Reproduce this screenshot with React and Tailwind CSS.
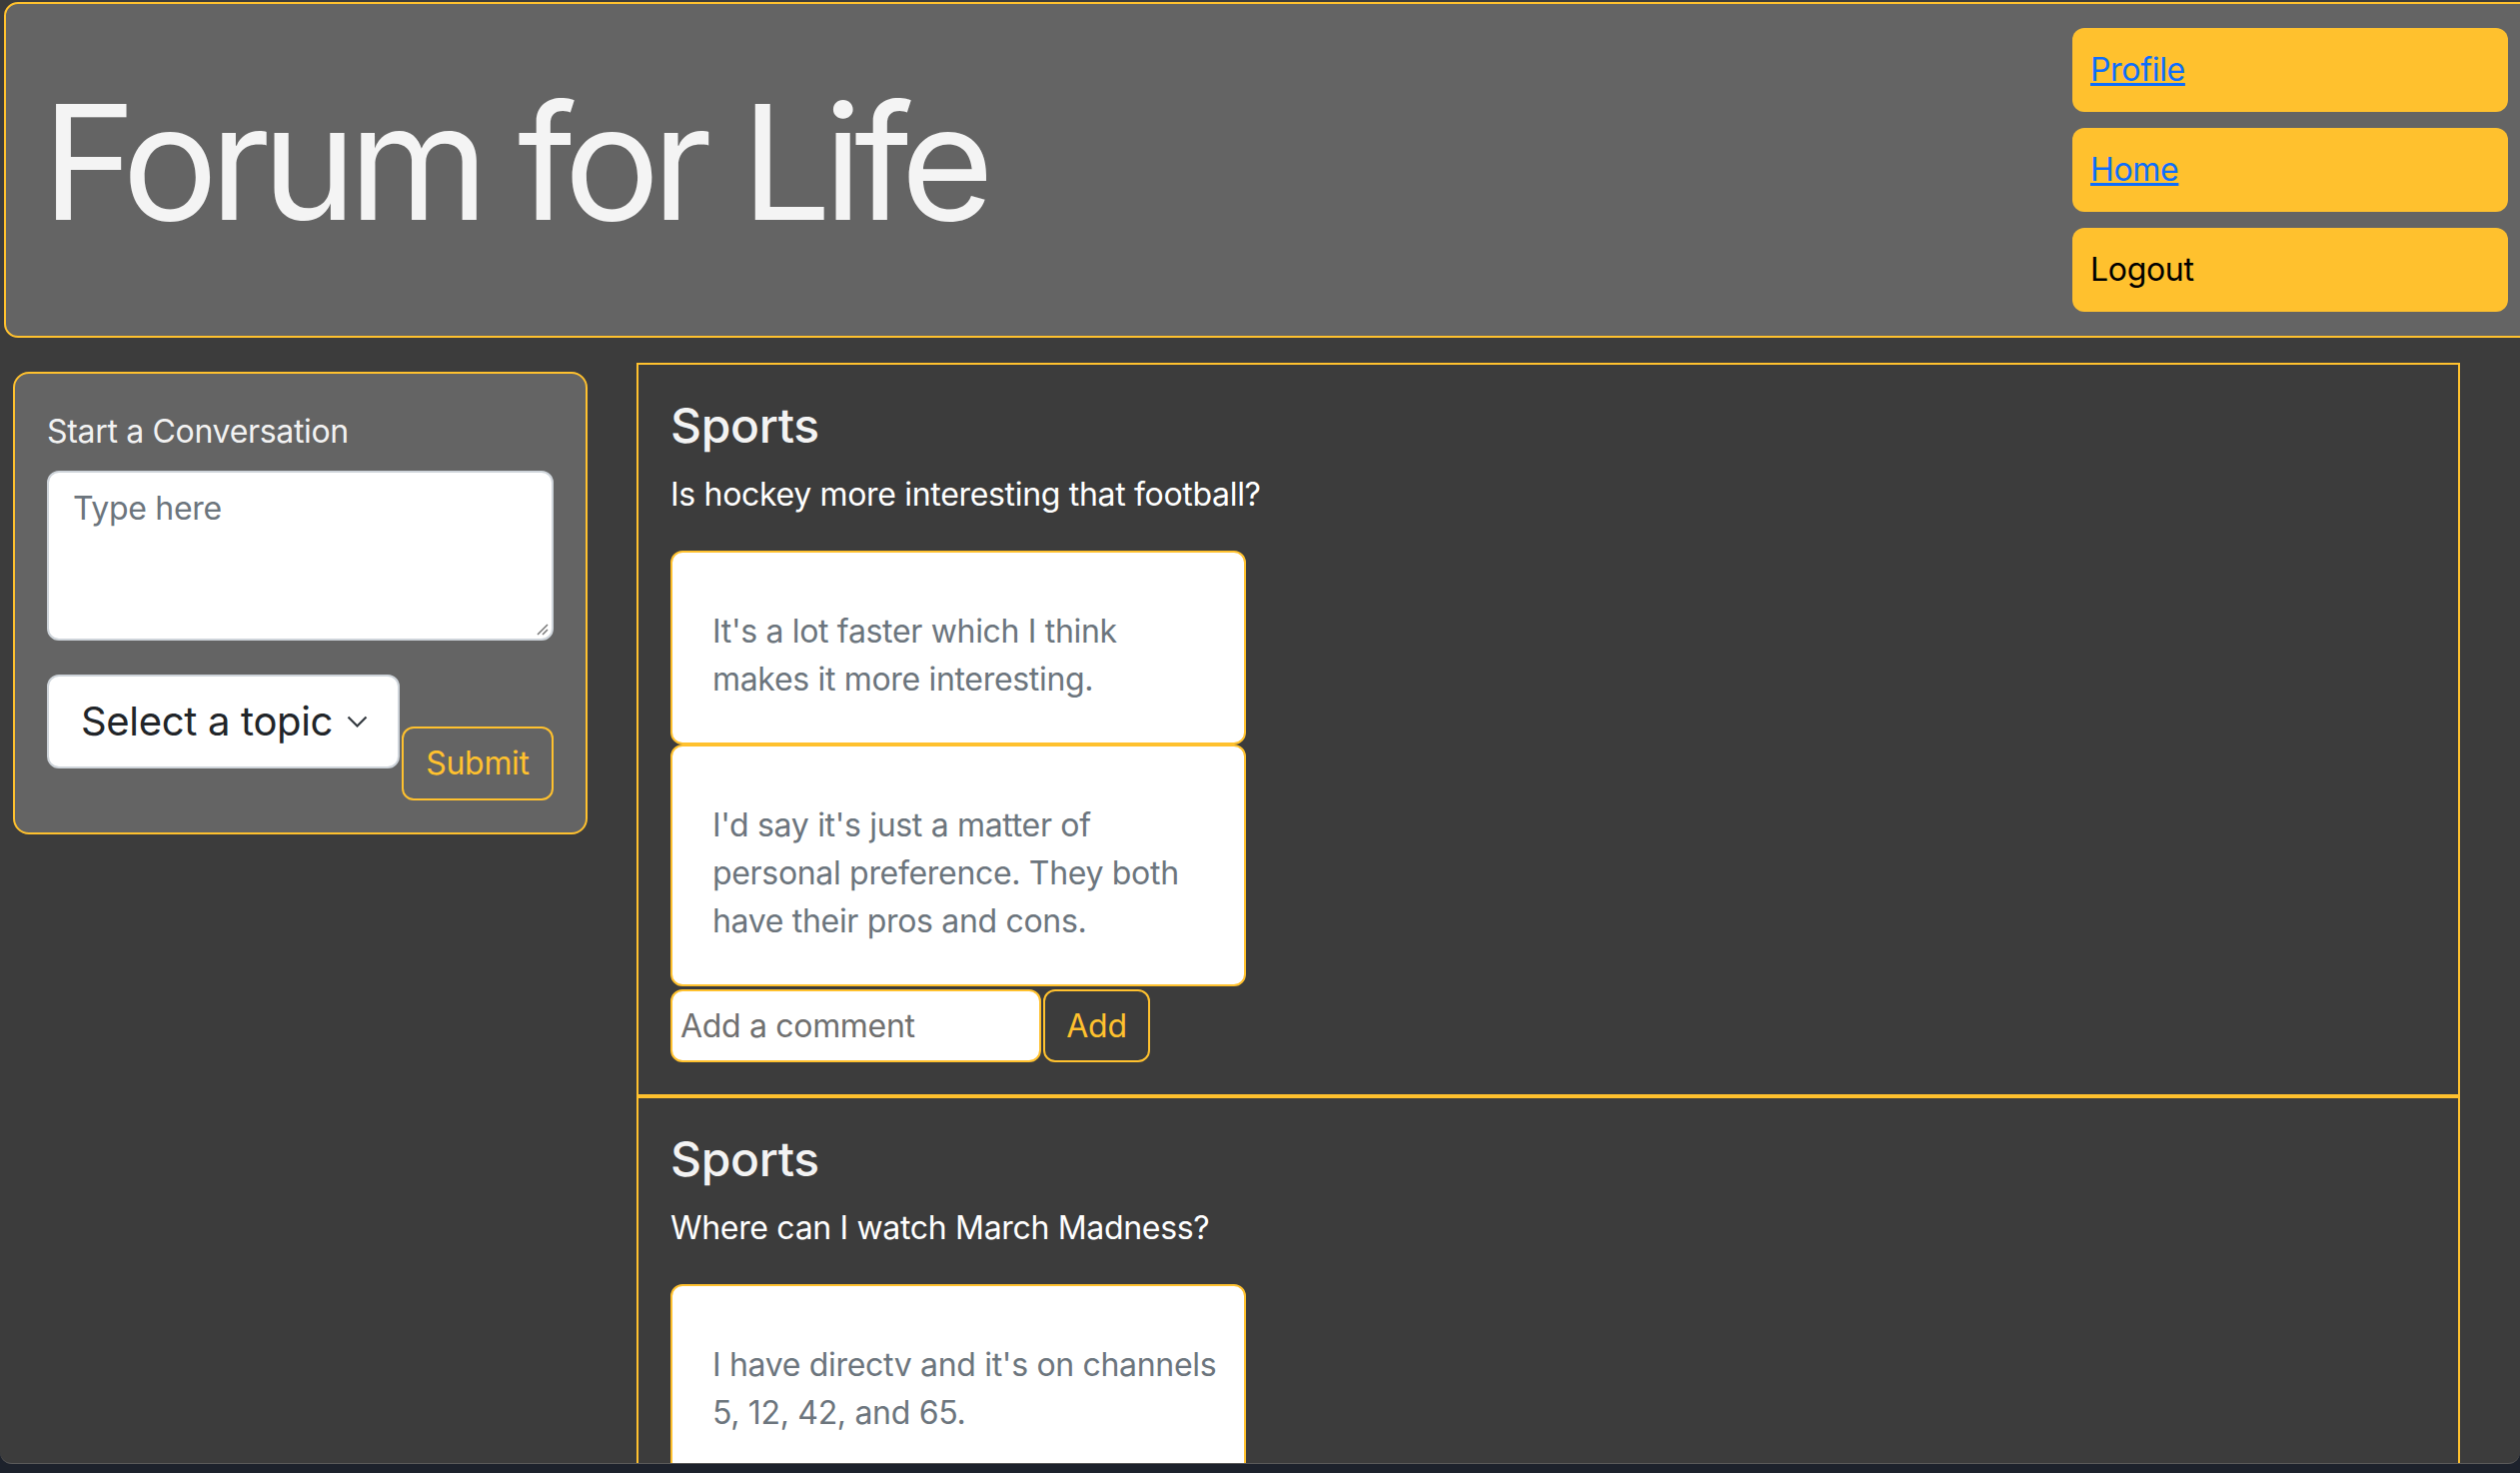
import React from "react";

function Card({ lines }) {
  return (
    <div className="w-[576px] rounded-[12px] border-2 border-[#ffc12e] bg-white pl-[40px] pr-[32px] pt-[55px] pb-[39px]">
      {lines.map((l, i) => (
        <div key={i} className="whitespace-nowrap text-[32px] leading-[48px] text-[#6c757d]">
          {l}
        </div>
      ))}
    </div>
  );
}

function Post({ question, cards, withInput }) {
  return (
    <div className="border-2 border-[#ffc12e] px-[32px] pt-[32px] pb-[32px]">
      <h4 className="text-[48px] font-medium leading-[58px] text-[#f3f3f3]">Sports</h4>
      <p className="mt-[16px] text-[32px] leading-[48px] text-white">{question}</p>
      <div className="mt-[32px] flex flex-col">
        {cards.map((c, i) => (
          <Card key={i} lines={c} />
        ))}
      </div>
      {withInput && (
        <div className="mt-[3px] flex items-stretch">
          <div className="flex h-[73px] w-[371px] items-center rounded-[12px] border-2 border-[#ffc12e] bg-white pl-[8px] text-[32px] text-[#707070]">
            Add a comment
          </div>
          <div className="ml-[2px] flex h-[73px] w-[107px] items-center justify-center rounded-[12px] border-2 border-[#ffc12e] bg-[#3c3c3c] text-[32px] text-[#ffc12e]">
            Add
          </div>
        </div>
      )}
    </div>
  );
}

export default function App() {
  return (
    <div className="h-[1474px] w-[2522px] overflow-hidden bg-[#1d222c] font-['Inter','Noto_Sans',sans-serif] tracking-[-0.02em]">
      <div className="h-[1465px] overflow-hidden rounded-b-[12px] border-b border-[#5a5a5a] bg-[#3c3c3c]">
        <header className="ml-[4px] mt-[2px] flex h-[336px] w-[2540px] items-center justify-between rounded-l-[14px] border-2 border-[#ffc12e] bg-[#646464] pl-[36px] pr-[32px]">
          <h1 className="mb-[16px] whitespace-nowrap text-[160px] font-normal leading-[192px] tracking-[-8px] text-[#f4f4f4]">
            Forum for Life
          </h1>
          <nav className="flex w-[436px] flex-col gap-[16px]">
            <div className="flex h-[84px] items-center rounded-[12px] bg-[#ffc12e] pl-[18px] text-[32px]">
              <a className="text-[#0d6efd] underline">Profile</a>
            </div>
            <div className="flex h-[84px] items-center rounded-[12px] bg-[#ffc12e] pl-[18px] text-[32px]">
              <a className="text-[#0d6efd] underline">Home</a>
            </div>
            <div className="flex h-[84px] items-center rounded-[12px] bg-[#ffc12e] pl-[18px] text-[32px] text-black">
              Logout
            </div>
          </nav>
        </header>

        <div className="flex items-start">
          <aside className="ml-[13px] mt-[34px] w-[575px] rounded-[16px] border-2 border-[#ffc12e] bg-[#646464] px-[32px] pt-[34px] pb-[32px]">
            <div className="text-[32px] leading-[48px] text-[#f2f2f2]">Start a Conversation</div>
            <div className="relative mt-[15px] h-[170px] rounded-[12px] border-2 border-[#ced4da] bg-white px-[24px] py-[12px] text-[32px] leading-[48px] text-[#6c757d]">
              Type here
              <svg className="absolute bottom-[3px] right-[3px]" width="14" height="14" viewBox="0 0 14 14">
                <path d="M13 3 L3 13 M13 8 L8 13" stroke="#777" strokeWidth="1.5" />
              </svg>
            </div>
            <div className="mt-[34px] flex items-start">
              <div className="flex h-[94px] w-[353px] items-center justify-between rounded-[12px] border-2 border-[#ced4da] bg-white pl-[32px] pr-[30px] text-[40px] text-[#212529]">
                <span className="whitespace-nowrap">Select a topic</span>
                <svg width="21" height="12" viewBox="0 0 21 12">
                  <path d="M1.5 1.5 L10.5 10.5 L19.5 1.5" stroke="#343a40" strokeWidth="2.2" fill="none" />
                </svg>
              </div>
              <div className="ml-[2px] mt-[52px] flex h-[74px] w-[152px] items-center justify-center rounded-[12px] border-2 border-[#ffc12e] text-[32px] text-[#ffc12e]">
                Submit
              </div>
            </div>
          </aside>

          <main className="ml-[49px] mt-[25px] w-[1825px]">
            <Post
              question="Is hockey more interesting that football?"
              cards={[
                ["It's a lot faster which I think", "makes it more interesting."],
                [
                  "I'd say it's just a matter of",
                  "personal preference. They both",
                  "have their pros and cons.",
                ],
              ]}
              withInput
            />
            <Post
              question="Where can I watch March Madness?"
              cards={[["I have directv and it's on channels", "5, 12, 42, and 65."]]}
              withInput
            />
          </main>
        </div>
      </div>
    </div>
  );
}
